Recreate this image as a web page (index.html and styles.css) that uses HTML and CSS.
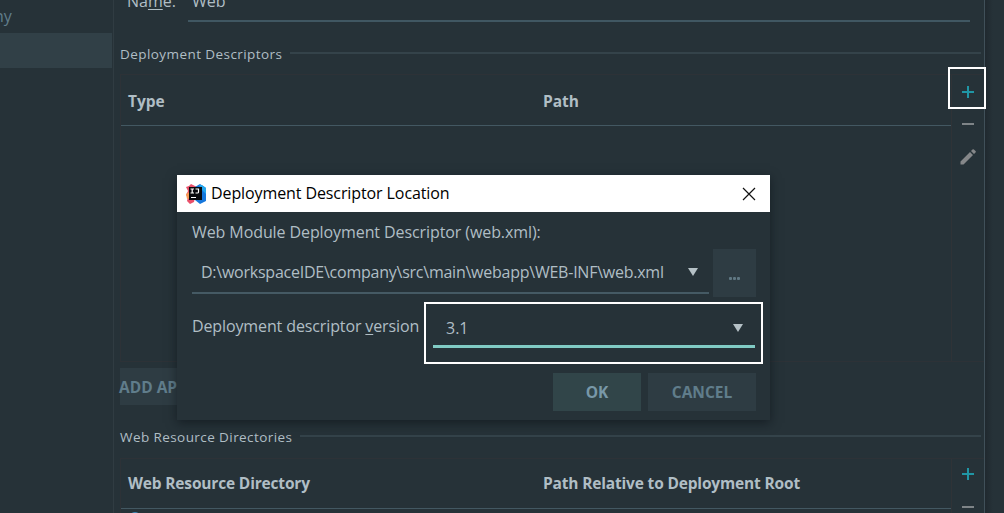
FILE: index.html
```html
<!DOCTYPE html>
<html lang="en">
<head>
<meta charset="utf-8">
<title>Deployment Descriptor Location</title>
<link rel="stylesheet" href="styles.css">
</head>
<body>
<div class="window">
  <aside class="sidebar">
    <div class="module">ny</div>
    <div class="module-selected"></div>
  </aside>
  <main class="main">
    <div class="name-row">
      <label class="name-label">Na<u>m</u>e:</label>
      <div class="name-field">Web</div>
    </div>
    <div class="section-title first"><span class="t-dd">Deployment Descriptors</span><i></i></div>
    <section class="table descriptors">
      <div class="grid">
        <div class="head"><span class="t-type">Type</span><span class="t-path">Path</span></div>
      </div>
      <div class="tools">
        <svg width="14" height="14" viewBox="0 0 14 14"><path d="M1 7h12M7 1v12" stroke="#2096a5" stroke-width="2"/></svg>
        <svg class="minus" width="14" height="4" viewBox="0 0 14 4"><path d="M1 2h12" stroke="#7e8487" stroke-width="2"/></svg>
        <svg class="pencil" width="16" height="16" viewBox="0 0 16 16"><path d="M.5 12.500 10 3l3 3-9.500 9.500h-3zM11 2l1.500-1.500q.7-.7 1.400 0l1.600 1.600q.7.7 0 1.400L14 5z" fill="#858789"/></svg>
        <div class="highlight-add"></div>
      </div>
    </section>
    <div class="add-button"><span>ADD AP</span></div>
    <div class="section-title second"><span class="t-wr">Web Resource Directories</span><i></i></div>
    <section class="table resources">
      <div class="grid">
        <div class="head"><span class="t-wrd">Web Resource Directory</span><span class="t-prd">Path Relative to Deployment Root</span></div>
        <div class="resource-row"><b></b></div>
      </div>
      <div class="tools">
        <svg width="14" height="14" viewBox="0 0 14 14"><path d="M1 7h12M7 1v12" stroke="#2096a5" stroke-width="2"/></svg>
        <svg class="minus" width="14" height="4" viewBox="0 0 14 4"><path d="M1 2h12" stroke="#7e8487" stroke-width="2"/></svg>
      </div>
    </section>
  </main>
  <div class="edge"></div>

  <div class="dialog">
    <header class="titlebar">
      <svg class="logo" width="20" height="20" viewBox="0 0 20 20">
        <path d="M0 3 3 2 5 0l6 3-3 15-4 2-3-3 1-4-2-2 2-4z" fill="#e9506a"/>
        <path d="M0 10 5 7v7l-4 1z" fill="#f79a55"/>
        <path d="m9 3 5-3 6 4v13l-6 3-5-4z" fill="#1677dc"/>
        <path d="m13 1 3 0 4 3v6l-5-5z" fill="#23a6ed"/>
        <path d="M3 3h13v13H3z" fill="#080a0d"/>
        <path d="M4.500 5h3.500M6.200 5v4M4.500 9h3.500M9.500 5h3v3.200Q12.400 9 11.400 9H9.500M5 13.500h5" fill="none" stroke="#fff" stroke-width="1.200"/>
      </svg>
      <span class="title">Deployment Descriptor Location</span>
      <svg class="close" width="14" height="14" viewBox="0 0 14 14"><path d="m1 1 12 12M13 1 1 13" stroke="#111" stroke-width="1.200"/></svg>
    </header>
    <div class="content">
      <div class="caption"><span>Web Module Deployment Descriptor (web.xml):</span></div>
      <div class="path-row">
        <div class="combo path-combo">
          <span class="path-text">D:\workspaceIDE\company\src\main\webapp\WEB-INF\web.xml</span>
          <svg width="10" height="8" viewBox="0 0 10 8"><path d="M0 0h10L5 8z" fill="#b5c1c6"/></svg>
        </div>
        <div class="browse"><i></i><i></i><i></i></div>
      </div>
      <div class="version-row">
        <span class="version-label">Deployment descriptor <u>v</u>ersion</span>
        <div class="version-highlight">
          <div class="combo version-combo"><span>3.1</span>
            <svg width="10" height="8" viewBox="0 0 10 8"><path d="M0 0h10L5 8z" fill="#b5c1c6"/></svg>
          </div>
        </div>
      </div>
      <div class="actions"><div class="btn ok">OK</div><div class="btn cancel">CANCEL</div></div>
    </div>
  </div>
</div>
</body>
</html>
```
FILE: styles.css
```css
* { box-sizing: border-box; }
body { margin: 0; background: #263238; color: #b0bec5; font: 16px/20px "Open Sans", "Noto Sans", sans-serif; }
svg { display: block; flex: none; }
u { text-decoration: underline; text-decoration-thickness: 1px; text-underline-offset: 2px; }
span { white-space: nowrap; }
.window { position: relative; display: flex; width: 1004px; height: 513px; overflow: hidden; }
.sidebar { width: 114px; border-right: 1px solid #303c42; flex: none; }
.module { height: 33px; padding-top: 6px; margin-left: -6px; color: #607d8b; }
.module-selected { width: 112px; height: 35px; background: #314047; }
.main { width: 871px; flex: none; padding-left: 6px; border-right: 1px solid #405059; height: 513px; }
.edge { flex: 1; background: linear-gradient(90deg, #20292f, #263238 8px); }

.name-row { display: flex; height: 22px; }
.name-label { width: 68px; padding-left: 7px; margin-top: -9px; height: 20px; }
.name-field { width: 782px; height: 31px; margin-top: -9px; border-bottom: 2px solid #405762; padding-left: 4px; }
.section-title { display: flex; align-items: center; height: 20px; font-size: 13.500px; }
.section-title i { flex: 1; height: 2px; background: #34434a; margin: -2px 3px 0 8px; }
.first { margin-top: 22px; }
.second { margin-top: 22px; }
.t-dd { width: 162px; letter-spacing: .43px; }
.t-wr { width: 172px; letter-spacing: .42px; }
.table { display: flex; border: 1px solid #2d3237; border-right: 0; }
.descriptors { height: 288px; margin-top: 10px; }
.resources { height: 56px; margin-top: 11px; }
.grid { width: 832px; border-right: 1px solid #2f3337; }
.head { display: flex; align-items: center; height: 51px; padding: 2px 0 0 7px; border-bottom: 1px solid #435862; font-weight: 700; font-size: 15.500px; }
.head span:first-child { width: 415px; }
.t-wrd, .t-prd { letter-spacing: -.17px; }
.tools { position: relative; width: 32px; display: flex; flex-direction: column; align-items: center; padding: 10px 0 0 0; }
.tools .minus { margin-top: 23px; }
.tools .pencil { margin-top: 23px; }
.resources .head { height: 50px; padding: 0 0 2px 7px; }
.resources .tools { padding-top: 8px; }
.resources .tools .minus { margin-top: 24px; }
.resource-row { padding: 3px 0 0 8px; }
.resource-row b { display: block; width: 12px; height: 12px; border-radius: 6px; background: #3f87b5; }
.highlight-add { position: absolute; left: -4px; top: -8px; width: 38px; height: 42px; border: 2px solid #fff; }
.add-button { margin-top: 6px; width: 120px; height: 37px; background: #2e3c43; color: #607d8b; font-weight: 700; font-size: 15.500px; line-height: 39px; }
.add-button span { margin-left: -1px; }

.dialog { position: absolute; left: 177px; top: 175px; width: 593px; height: 245px; background: #263238; box-shadow: 0 3px 10px rgba(10, 15, 20, .55); }
.titlebar { display: flex; align-items: center; height: 37px; padding: 0 14px 0 9px; background: #fff; color: #000; }
.title { margin: -2px 0 0 5px; flex: 1; letter-spacing: -.1px; }
.content { padding: 10px 7px 0 15px; }
.caption { height: 20px; letter-spacing: -.09px; }
.path-row { display: flex; height: 48px; margin-top: 7px; gap: 4px; }
.path-text { letter-spacing: -.24px; }
.combo { display: flex; align-items: center; justify-content: space-between; }
.path-combo { width: 517px; height: 45px; padding: 2px 11px 0 9px; border-bottom: 2px solid #455a64; }
.browse { display: flex; justify-content: center; gap: 1px; width: 43px; height: 48px; padding-top: 28px; background: #2e3c43; }
.browse i { width: 3px; height: 3px; background: #607883; border-radius: 1px; }
.version-row { display: flex; margin-top: 5px; height: 62px; }
.version-label { width: 232px; padding-top: 14px; letter-spacing: -.12px; }
.version-highlight { width: 339px; border: 2px solid #fff; padding: 6px 6px 0 7px; }
.version-combo { height: 38px; padding: 0 12px 0 13px; border-bottom: 3px solid #80cbc4; }
.actions { display: flex; justify-content: flex-end; gap: 7px; padding: 9px 7px 0 0; }
.btn { height: 38px; line-height: 38px; text-align: center; font-weight: 700; font-size: 15.500px; }
.ok { width: 88px; background: #314549; color: #7898a8; }
.cancel { width: 108px; background: #2e3c43; color: #607d8b; }
```
